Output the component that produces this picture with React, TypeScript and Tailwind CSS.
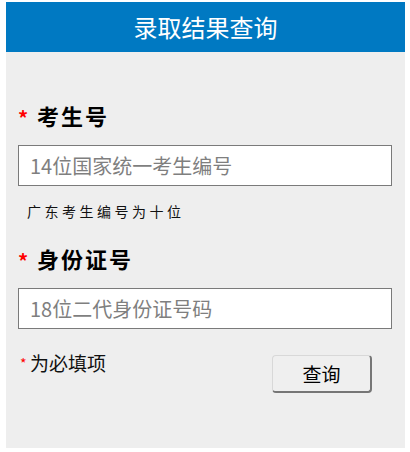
export default function App() {
  const font = "font-['Noto_Sans_CJK_SC','Noto_Sans',sans-serif]";

  return (
    <div className={`bg-white pt-[2px] pl-[6px] pb-[4px] ${font}`}>
      <div className="w-[399px]">
        {/* Header */}
        <div className="h-[50px] bg-[#0079c2] flex items-center justify-center">
          <h1 className="text-white text-[24px] leading-none">录取结果查询</h1>
        </div>

        {/* Form panel */}
        <div className="bg-[#eeeeee] pl-[12px] pr-[13px] pt-[48px] pb-[55px]">
          <div className="h-[30px] flex items-center">
            <span className="text-[#ff0000] text-[20px] font-bold leading-none w-[19px] pt-[6px]">*</span>
            <span className="text-black text-[22px] font-bold leading-none tracking-[2px]">考生号</span>
          </div>

          <input
            type="text"
            placeholder="14位国家统一考生编号"
            className="mt-[15px] block w-full h-[41px] bg-white border border-[#7a7a7a] pl-[11px] text-[20px] text-black placeholder:text-[#7f7f7f] outline-none"
          />

          <div className="mt-[13px] h-[24px] flex items-center pl-[9px]">
            <span className="text-[14px] tracking-[3.5px] text-[#111]">广东考生编号为十位</span>
          </div>

          <div className="mt-[20px] h-[30px] flex items-center">
            <span className="text-[#ff0000] text-[20px] font-bold leading-none w-[19px] pt-[6px]">*</span>
            <span className="text-black text-[22px] font-bold leading-none tracking-[2px]">身份证号</span>
          </div>

          <input
            type="text"
            placeholder="18位二代身份证号码"
            className="mt-[15px] block w-full h-[41px] bg-white border border-[#7a7a7a] pl-[11px] text-[20px] text-black placeholder:text-[#7f7f7f] outline-none"
          />

          <div className="mt-[20px] flex items-start justify-between">
            <div className="h-[26px] flex items-center">
              <span className="text-[#ff0000] text-[14px] leading-none pl-[2px] w-[12px] self-start pt-[7px]">*</span>
              <span className="text-[#111] text-[19px] leading-none">为必填项</span>
            </div>
            <button
              type="button"
              className="mt-[6px] mr-[20px] w-[100px] h-[38px] rounded-[4px] bg-[#efefef] border-t border-l border-[#d8d8d8] border-r-2 border-b-2 border-r-[#767676] border-b-[#767676] text-[19px] text-black leading-none"
            >
              查询
            </button>
          </div>
        </div>
      </div>
    </div>
  );
}
